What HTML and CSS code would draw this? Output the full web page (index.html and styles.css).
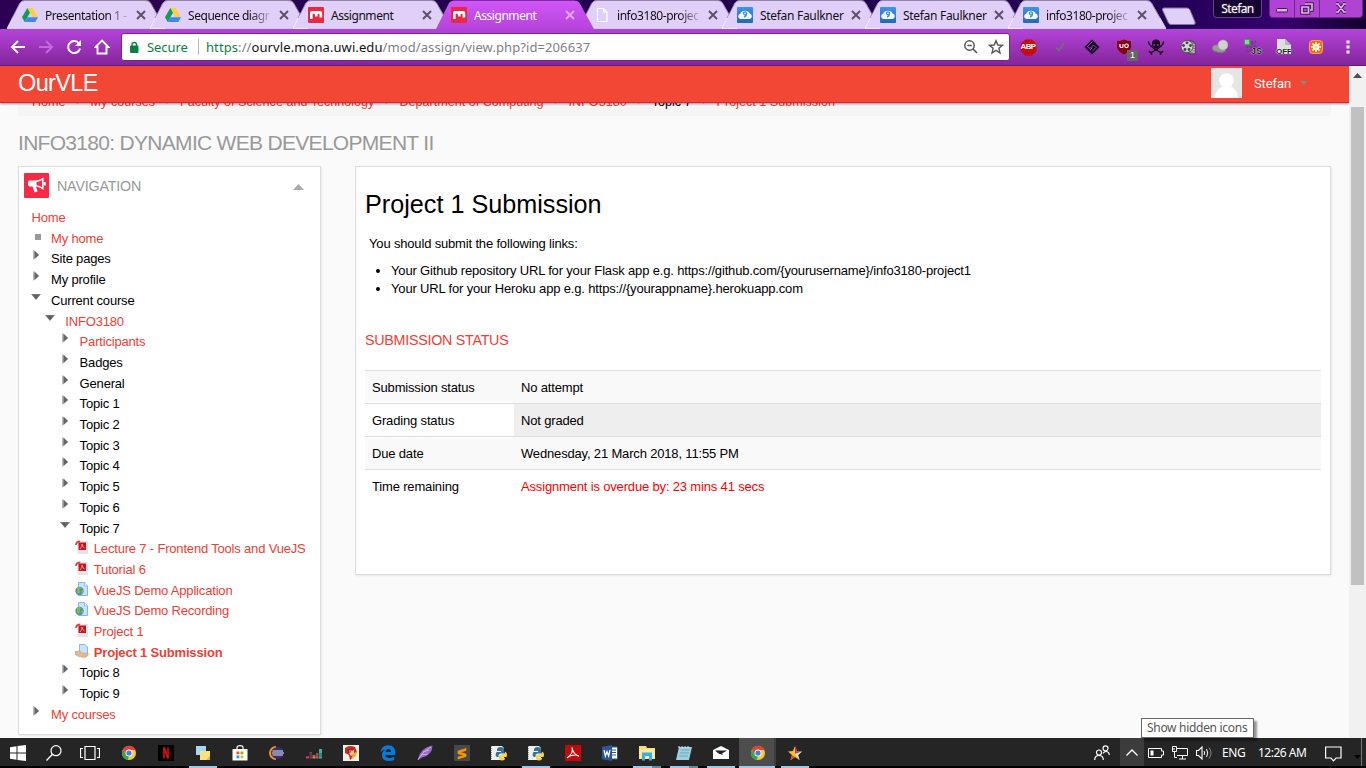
FILE: index.html
```html
<!DOCTYPE html>
<html lang="en">
<head>
<meta charset="utf-8">
<title>Assignment</title>
<link rel="stylesheet" href="styles.css">
</head>
<body>
<svg class="defs" width="0" height="0" aria-hidden="true">
  <defs>
    <linearGradient id="gActive" x1="0" y1="0" x2="0" y2="1"><stop offset="0" stop-color="#d256f8"/><stop offset="1" stop-color="#b544db"/></linearGradient>
    <linearGradient id="gSky" x1="0" y1="0" x2="0" y2="1"><stop offset="0" stop-color="#3d95ea"/><stop offset="1" stop-color="#2468b4"/></linearGradient>
    <symbol id="tab" viewBox="0 0 158 29"><path d="M0 28.500L13 3Q14.500 .5 18 .5H138Q142 .5 143.500 3L158 28.500Z" fill="#e0cff9" stroke="#fff" stroke-opacity=".65"/><path d="M5 18L13 3Q14.500 .5 18 .5H138Q142 .5 143.500 3L152 18" fill="none" stroke="#71608f" stroke-opacity=".65"/></symbol>
    <symbol id="tab-on" viewBox="0 0 158 29"><path d="M0 29L13 3Q14.500 .5 18 .5H138Q142 .5 143.500 3L158 29Z" fill="url(#gActive)"/></symbol>
    <symbol id="drive" viewBox="0 0 16 14"><path d="M5.300 0H10.700L16 9.300H10.600Z" fill="#ffcd40"/><path d="M5.300 0L8 4.700 2.700 14 0 9.300Z" fill="#0f9d58"/><path d="M5.400 9.300H16L13.300 14H2.700Z" fill="#4285f4"/></symbol>
    <symbol id="mendeley" viewBox="0 0 16 16"><rect width="16" height="16" rx="1" fill="#e92842"/><path d="M2 12V6Q2 4 4 4H12Q14.200 4 14.200 6V10.500H11.500V6.800H10.500Q9.500 6.800 9.500 8V9.500H7V8Q7 6.800 6 6.800H4.600V12Z" fill="#fff"/></symbol>
    <symbol id="cloud9" viewBox="0 0 16 16"><rect width="16" height="16" rx="1" fill="url(#gSky)"/><path d="M3.500 12a2.700 2.700 0 0 1-.3-5.300A5 4.500 0 0 1 12.600 6.500a2.800 2.800 0 0 1 0 5.500Z" fill="#f4f9fd"/><circle cx="8" cy="6.300" r="1.500" fill="none" stroke="#3c93cf" stroke-width="1.300"/><path d="M9.500 6.300Q9.500 9.500 7 10" fill="none" stroke="#3c93cf" stroke-width="1.300"/></symbol>
    <symbol id="page" viewBox="0 0 16 16"><path d="M3.500 1.500H9.500L13 5V14.500H3.500ZM9.500 1.500V5H13" fill="none" stroke="#fff" stroke-width="1.200"/></symbol>
    <symbol id="x" viewBox="0 0 10 10"><path d="M1 1L9 9M9 1L1 9" stroke="currentColor" stroke-width="1.900"/></symbol>
    <symbol id="right" viewBox="0 0 6 10"><path d="M0 0L6 5 0 10Z" fill="#bbb"/><path d="M1.500 .5L6 5 1.500 9Z" fill="#666"/></symbol>
    <symbol id="down" viewBox="0 0 10 6"><path d="M0 0H10L5 6Z" fill="#777"/><path d="M2 1H8L5 5Z" fill="#606060"/></symbol>
    <symbol id="pdf" viewBox="0 0 14 14"><path d="M2.500 1H13V14H2.500Z" fill="#e4e5e9"/><rect x="3.500" y="2.500" width="7.500" height="7.500" fill="#c9141d"/><path d="M0 5Q.5 .6 5.500 .6L4.500 2.800Q2.200 2.600 1.600 5Z" fill="#e93b3b"/><path d="M5 9Q7.500 6.500 7 4Q7.300 7 9.700 8" fill="none" stroke="#f3b0b0" stroke-width=".8"/></symbol>
    <symbol id="url" viewBox="0 0 14 14"><path d="M3.500 .5H9.500L12.500 3.500V13.500H3.500Z" fill="#c7e2fa" stroke="#88b6e4"/><path d="M9.500 .5V4H13" fill="#eef7ff" stroke="#88b6e4" stroke-width=".8"/><circle cx="4.500" cy="9" r="4.200" fill="#5489c4"/><path d="M2 6Q5 3.800 6 6.500L4.500 8 5.500 10 3.500 12 2 10.500ZM6.500 8.500L8.500 8 8 11 6.500 11.500Z" fill="#80c13c"/></symbol>
    <symbol id="assign" viewBox="0 0 14 14"><path d="M4.500 .5H10L12.500 3V10.500H4.500Z" fill="#c7e2fa" stroke="#88b6e4"/><path d="M0 7.500L5 7 7 9 13.500 9.500Q13 13 9 13.500L4 12.500 0 10.500Z" fill="#e5b88d" stroke="#c89065" stroke-width=".5"/></symbol>
    <symbol id="chrome" viewBox="0 0 16 16"><circle cx="8" cy="8" r="7" fill="#f9ca31"/><path d="M1.900 4.500A7 7 0 0 1 14.500 5H8L5 9.700Z" fill="#e14434"/><path d="M1.900 4.500L5.300 10 8 11.300 6.700 14.900A7 7 0 0 1 1.900 4.500Z" fill="#36a457"/><circle cx="8" cy="8" r="3.500" fill="#fff"/><circle cx="8" cy="8" r="2.600" fill="#427fe0"/></symbol>
    <symbol id="python" viewBox="0 0 16 16"><path d="M0 1H11L13 3V15H0Z" fill="#f1f1ef"/><path d="M.5 1V15" stroke="#999" stroke-width="1" stroke-dasharray="1 1"/><path d="M9.500 2Q5.500 2 6 6H10V7H5.500Q3.500 11 6 12H7.500Q7 8.500 10 8.500H13V4Q13 2 9.500 2Z" fill="#35739f"/><path d="M14 6.500Q17 8 15.500 12H11V13H14Q14 15.500 11 15.500 8 15.500 8 13V11Q8 9.500 11 9.500 14 9 14 6.500Z" fill="#ffd43d"/></symbol>
  </defs>
</svg>

<header class="browser">
  <div class="tabstrip">
    <div class="tabs">
      <div class="tab"><svg class="shape"><use href="#tab"/></svg><svg class="fav drive"><use href="#drive"/></svg><span class="tab-title">Presentation 1 -</span><svg class="close"><use href="#x"/></svg></div>
      <div class="tab"><svg class="shape"><use href="#tab"/></svg><svg class="fav drive"><use href="#drive"/></svg><span class="tab-title">Sequence diagr</span><svg class="close"><use href="#x"/></svg></div>
      <div class="tab"><svg class="shape"><use href="#tab"/></svg><svg class="fav"><use href="#mendeley"/></svg><span class="tab-title">Assignment</span><svg class="close"><use href="#x"/></svg></div>
      <div class="tab active"><svg class="shape"><use href="#tab-on"/></svg><svg class="fav"><use href="#mendeley"/></svg><span class="tab-title">Assignment</span><svg class="close"><use href="#x"/></svg></div>
      <div class="tab"><svg class="shape"><use href="#tab"/></svg><svg class="fav"><use href="#page"/></svg><span class="tab-title">info3180-projec</span><svg class="close"><use href="#x"/></svg></div>
      <div class="tab"><svg class="shape"><use href="#tab"/></svg><svg class="fav"><use href="#cloud9"/></svg><span class="tab-title full">Stefan Faulkner</span><svg class="close"><use href="#x"/></svg></div>
      <div class="tab"><svg class="shape"><use href="#tab"/></svg><svg class="fav"><use href="#cloud9"/></svg><span class="tab-title full">Stefan Faulkner</span><svg class="close"><use href="#x"/></svg></div>
      <div class="tab"><svg class="shape"><use href="#tab"/></svg><svg class="fav"><use href="#cloud9"/></svg><span class="tab-title">info3180-projec</span><svg class="close"><use href="#x"/></svg></div>
    </div>
    <svg class="newtab" width="36" height="19" viewBox="0 0 36 19"><path d="M3 1H26Q28 1 29 3L34 15Q35 17.500 32 17.500H10Q8 17.500 7 15L1.500 3Q1 1 3 1Z" fill="#e0cff9" stroke="#8575a0"/></svg>
    <div class="window">
      <span class="profile">Stefan</span>
      <div class="controls">
        <span class="ctl"><svg width="12" height="16" viewBox="0 0 12 16"><rect x=".5" y="8.500" width="11" height="3.500" rx="1" fill="#d8b2e6" stroke="#461854"/></svg></span>
        <span class="ctl"><svg width="14" height="16" viewBox="0 0 14 16"><path d="M5 4H12V10H10M2 7H8.500V13H2Z" fill="none" stroke="#461854" stroke-width="3.600"/><path d="M5 4H12V10H10M2 7H8.500V13H2Z" fill="none" stroke="#dfb6eb" stroke-width="1.700"/></svg></span>
        <span class="ctl wide"><svg width="12" height="16" viewBox="0 0 12 16"><path d="M3 4L9 12M9 4L3 12M1 12H4M8 12H11M1 4H4M8 4H11" fill="none" stroke="#461854" stroke-width="3.500"/><path d="M3 4L9 12M9 4L3 12M1 12H4M8 12H11M1 4H4M8 4H11" fill="none" stroke="#dfb6eb" stroke-width="1.500"/></svg></span>
      </div>
    </div>
  </div>

  <div class="toolbar">
    <div class="navbtns">
      <svg width="16" height="16" viewBox="0 0 16 16"><path d="M15 8H2M8 2L2 8 8 14" fill="none" stroke="#fff" stroke-width="2"/></svg>
      <svg width="16" height="16" viewBox="0 0 16 16"><path d="M1 8H14M8 2L14 8 8 14" fill="none" stroke="#c46bdc" stroke-width="2"/></svg>
      <svg width="16" height="16" viewBox="0 0 16 16"><path d="M13 4.500A6 6 0 1 0 14 9.500" fill="none" stroke="#fff" stroke-width="2"/><path d="M15 1V7H9Z" fill="#fff"/></svg>
      <svg width="16" height="16" viewBox="0 0 16 16"><path d="M8 1.500L14.500 8H12.500V14.500H3.500V8H1.500Z" fill="none" stroke="#fff" stroke-width="1.900"/></svg>
    </div>
    <div class="omnibox">
      <svg class="lock" width="10" height="13" viewBox="0 0 10 13"><rect x="1" y="4.500" width="8.500" height="7.500" rx="1" fill="#0b8043"/><path d="M3 5V3.500Q3 1.500 5.200 1.500T7.500 3.500V5" fill="none" stroke="#0b8043" stroke-width="1.400"/></svg>
      <span class="secure">Secure</span><span class="bar"></span>
      <span class="addr"><span class="green">https</span>://<b>ourvle.mona.uwi.edu</b>/mod/assign/view.php?id=206637</span>
      <svg class="mag" width="16" height="16" viewBox="0 0 16 16"><circle cx="6.500" cy="6.500" r="4.700" fill="none" stroke="#555" stroke-width="1.500"/><path d="M4.300 6.500H8.700M10 10L14 14" stroke="#555" stroke-width="1.700"/></svg>
      <svg width="16" height="16" viewBox="0 0 16 16"><path d="M8 1.700L9.800 6 14.500 6.300 10.900 9.300 12 14 8 11.400 4 14 5.100 9.300 1.500 6.300 6.200 6Z" fill="none" stroke="#555" stroke-width="1.400"/></svg>
    </div>
    <div class="exts">
      <span class="ext"><svg width="17" height="17" viewBox="0 0 17 17"><path d="M5 .5H12L16.500 5V12L12 16.500H5L.5 12V5Z" fill="#c70d0d"/></svg><b class="abp">ABP</b></span>
      <span class="ext"><svg width="16" height="16" viewBox="0 0 16 16"><path d="M4 8.500L7 11.500 12 4" fill="none" stroke="#727272" stroke-width="1.700"/></svg></span>
      <span class="ext"><svg width="16" height="16" viewBox="0 0 16 16"><path d="M8 .5L15.500 8 8 15.500 .5 8Z" fill="#16061c"/><path d="M8.500 2.500L3.500 7.500 6 9.500 9.500 6 12 8.500 8 12.500M8.500 8.500L6 11" fill="none" stroke="#aa3acb" stroke-width="1"/></svg></span>
      <span class="ext"><svg width="16" height="16" viewBox="0 0 16 16"><path d="M8 .5Q11 2 15 2V8Q14 13 8 15.500 2 13 1 8V2Q5 2 8 .5Z" fill="#800010"/><path d="M4 5V7.500Q4 8.500 5.500 8.500T7 7.500V5" fill="none" stroke="#fff" stroke-width="1.200"/><circle cx="10.500" cy="6.800" r="1.800" fill="none" stroke="#fff" stroke-width="1.200"/></svg><i class="count">1</i></span>
      <span class="ext"><svg width="16" height="16" viewBox="0 0 16 16"><path d="M0 2Q1 8 14 14M16 2Q15 8 2 14M1 12L4 15.500M15 12L12 15.500" fill="none" stroke="#1a061f" stroke-width="1.500"/><path d="M4 4Q4 .5 8 .5T12 4V7L10 9V11H6V9L4 7Z" fill="#1a061f"/><path d="M5.500 5.500H7V6.500H5.500ZM9 5.500H10.500V6.500H9ZM7 9.500H9" fill="#a63ac6" stroke="#a63ac6" stroke-width=".4"/></svg></span>
      <span class="ext"><svg width="16" height="16" viewBox="0 0 16 16"><path d="M10 1L15 4V15H9Z" fill="#888" stroke="#333" stroke-width=".7"/><path d="M12 4V14M14 5V14" stroke="#eee" stroke-dasharray="1.5 1"/><circle cx="7" cy="7.500" r="6" fill="#d5d5d5" stroke="#555"/><g fill="#444"><circle cx="7" cy="3.800" r="1.400"/><circle cx="3.500" cy="6.500" r="1.400"/><circle cx="10.500" cy="6.500" r="1.400"/><circle cx="5" cy="10.500" r="1.400"/><circle cx="9" cy="10.500" r="1.400"/></g></svg></span>
      <span class="ext"><svg width="16" height="16" viewBox="0 0 16 16"><path d="M0 9Q1 5 6 6L10 8 14 12Q10 15 5 13 0 12 0 9Z" fill="#999" stroke="#777"/><circle cx="11" cy="6" r="5" fill="#d1d1d1" stroke="#aaa" stroke-width=".6"/></svg></span>
      <span class="ext"><svg width="17" height="17" viewBox="0 0 17 17"><path d="M8 2V6M8 5L12 2M5 8H12M2 8H4M7 7V13M3 11L6 13M10 6L13 8" stroke="#704080" stroke-width="2" stroke-dasharray="2.500 .7"/><rect x=".5" y=".5" width="5" height="5" fill="#80df8b" stroke="#3ba84e"/></svg><b class="js">JS</b></span>
      <span class="ext"><svg width="16" height="16" viewBox="0 0 16 16"><path d="M1 0H9L15 6V15H1Z" fill="#dedede"/><path d="M9 0V6H15Z" fill="#b8b8b8"/></svg><b class="off">OFF</b></span>
      <span class="ext"><svg width="16" height="16" viewBox="0 0 16 16"><rect x="1.500" y="1.500" width="13" height="13" rx="3" fill="#f46b1b" stroke="#fba45c"/><circle cx="8" cy="8" r="3.300" fill="#fffbe0"/><path d="M8 3V13M3 8H13M4.500 4.500L11.500 11.500M11.500 4.500L4.500 11.500" stroke="#fffbe0" stroke-width="1.700"/><circle cx="8" cy="8" r="1.500" fill="#ffda73"/></svg></span>
      <span class="ext"><svg width="4" height="14" viewBox="0 0 4 14"><path d="M.5 .5H3.500V3.500H.5ZM.5 5.500H3.500V8.500H.5ZM.5 10.500H3.500V13.500H.5Z" fill="#fff"/></svg></span>
    </div>
  </div>
</header>

<div class="viewport">
  <div class="site">
    <div class="topbar">
      <span class="brand">OurVLE</span>
      <div class="user">
        <svg class="avatar" width="31" height="30" viewBox="0 0 31 30"><rect width="31" height="30" fill="#e5e5e5"/><circle cx="15.500" cy="12.500" r="7.300" fill="#fff"/><path d="M4 30Q5 20 12 18.500H19Q26 20 27 30Z" fill="#fff"/></svg>
        <span class="username">Stefan</span><svg class="caret" width="7" height="4" viewBox="0 0 7 4"><path d="M0 0H7L3.500 4Z" fill="#8b8b7d"/></svg>
      </div>
    </div>
    <nav class="crumbs">
      <a>Home</a><i>/</i><a>My courses</a><i>/</i><a>Faculty of Science and Technology</a><i>/</i><a>Department of Computing</a><i>/</i><a>INFO3180</a><i>/</i><span>Topic 7</span><i>/</i><a>Project 1 Submission</a>
    </nav>
    <h1 class="course">INFO3180: DYNAMIC WEB DEVELOPMENT II</h1>
    <div class="columns">
      <aside class="block">
        <div class="block-head">
          <svg class="horn" width="25" height="25" viewBox="0 0 25 25"><rect width="25" height="25" rx="1" fill="#f62a46"/><path d="M5 7.500H11Q15 7.500 19.500 4.500V17Q15 13.500 12 13.500L13.500 18.500 10.500 19.500 8.500 13.500H6Q4 13.500 4 10.500T5 7.500Z" fill="#fff"/><path d="M12.500 9Q15.500 8.500 18 7.200V14.300Q15.500 12.700 12.500 12Z" fill="#f62a46"/><rect x="19.500" y="9" width="2.200" height="3.500" fill="#fff"/></svg>
          <h2>NAVIGATION</h2>
          <svg width="11" height="6" viewBox="0 0 11 6"><path d="M0 6L5.500 0 11 6Z" fill="#aaa"/></svg>
        </div>
        <ul class="tree">
          <li class="l0 link">Home</li>
          <li class="l1 link"><span class="tw"><i class="sq"></i></span>My home</li>
          <li class="l1"><span class="tw"><svg class="r"><use href="#right"/></svg></span>Site pages</li>
          <li class="l1"><span class="tw"><svg class="r"><use href="#right"/></svg></span>My profile</li>
          <li class="l1"><span class="tw"><svg class="d"><use href="#down"/></svg></span>Current course</li>
          <li class="l2 link"><span class="tw"><svg class="d"><use href="#down"/></svg></span>INFO3180</li>
          <li class="l3 link"><span class="tw"><svg class="r"><use href="#right"/></svg></span>Participants</li>
          <li class="l3"><span class="tw"><svg class="r"><use href="#right"/></svg></span>Badges</li>
          <li class="l3"><span class="tw"><svg class="r"><use href="#right"/></svg></span>General</li>
          <li class="l3"><span class="tw"><svg class="r"><use href="#right"/></svg></span>Topic 1</li>
          <li class="l3"><span class="tw"><svg class="r"><use href="#right"/></svg></span>Topic 2</li>
          <li class="l3"><span class="tw"><svg class="r"><use href="#right"/></svg></span>Topic 3</li>
          <li class="l3"><span class="tw"><svg class="r"><use href="#right"/></svg></span>Topic 4</li>
          <li class="l3"><span class="tw"><svg class="r"><use href="#right"/></svg></span>Topic 5</li>
          <li class="l3"><span class="tw"><svg class="r"><use href="#right"/></svg></span>Topic 6</li>
          <li class="l3"><span class="tw"><svg class="d"><use href="#down"/></svg></span>Topic 7</li>
          <li class="l4 link"><span class="tw"><svg class="f"><use href="#pdf"/></svg></span>Lecture 7 - Frontend Tools and VueJS</li>
          <li class="l4 link"><span class="tw"><svg class="f"><use href="#pdf"/></svg></span>Tutorial 6</li>
          <li class="l4 link"><span class="tw"><svg class="f"><use href="#url"/></svg></span>VueJS Demo Application</li>
          <li class="l4 link"><span class="tw"><svg class="f"><use href="#url"/></svg></span>VueJS Demo Recording</li>
          <li class="l4 link"><span class="tw"><svg class="f"><use href="#pdf"/></svg></span>Project 1</li>
          <li class="l4 link current"><span class="tw"><svg class="f"><use href="#assign"/></svg></span>Project 1 Submission</li>
          <li class="l3"><span class="tw"><svg class="r"><use href="#right"/></svg></span>Topic 8</li>
          <li class="l3"><span class="tw"><svg class="r"><use href="#right"/></svg></span>Topic 9</li>
          <li class="l1 link"><span class="tw"><svg class="r"><use href="#right"/></svg></span>My courses</li>
        </ul>
      </aside>
      <main class="content">
        <h2 class="title">Project 1 Submission</h2>
        <p class="intro">You should submit the following links:</p>
        <ul class="links">
          <li>Your Github repository URL for your Flask app e.g. https://github.com/{yourusername}/info3180-project1</li>
          <li>Your URL for your Heroku app e.g. https://{yourappname}.herokuapp.com</li>
        </ul>
        <h3 class="status">SUBMISSION STATUS</h3>
        <table class="grid">
          <tr><td>Submission status</td><td>No attempt</td></tr>
          <tr><td>Grading status</td><td>Not graded</td></tr>
          <tr><td>Due date</td><td>Wednesday, 21 March 2018, 11:55 PM</td></tr>
          <tr><td>Time remaining</td><td class="overdue">Assignment is overdue by: 23 mins 41 secs</td></tr>
        </table>
      </main>
    </div>
  </div>
  <div class="scrollbar"><svg width="9" height="5" viewBox="0 0 9 5"><path d="M4.500 0L9 5H0Z" fill="#505050"/></svg><div class="thumb"></div></div>
</div>

<div class="tooltip">Show hidden icons</div>

<footer class="taskbar">
  <div class="sys">
    <span><svg width="16" height="16" viewBox="0 0 16 16"><path d="M0 2.300L6.500 1.300V7.500H0ZM7.500 1.100L16 0V7.500H7.500ZM0 8.500H6.500V14.700L0 13.700ZM7.500 8.500H16V16L7.500 14.900Z" fill="#fff"/></svg></span>
    <span><svg width="16" height="16" viewBox="0 0 16 16"><circle cx="10" cy="5.700" r="5" fill="none" stroke="#fff" stroke-width="1.200"/><path d="M6.500 9.300L.5 15.500" stroke="#fff" stroke-width="1.400"/></svg></span>
    <span><svg width="20" height="16" viewBox="0 0 20 16"><path d="M5 1.500H15V14.500H5ZM3 3.500H.5V12.500H3M17 3.500H19.500V12.500H17" fill="none" stroke="#fff" stroke-width="1.200"/></svg></span>
  </div>
  <div class="apps">
    <span><svg><use href="#chrome"/></svg></span>
    <span><svg viewBox="0 0 16 16"><rect width="16" height="16" fill="#000"/><path d="M5 2.500H7V13.500H5ZM9 2.500H11V13.500H9Z" fill="#b00710"/><path d="M5 2.500H7L11 13.500H9Z" fill="#e50914"/></svg></span>
    <span class="run"><svg viewBox="0 0 16 16"><path d="M1 1H11V10H1Z" fill="#a5d8f3"/><path d="M5 6H15V15H5Z" fill="#f9e27d"/><path d="M11 15L15 11V15Z" fill="#d7b94c"/></svg></span>
    <span><svg viewBox="0 0 16 16"><path d="M.5 4H15.500V15.500H.5Z" fill="#fff"/><path d="M5 4V2.500Q5 .7 8 .7T11 2.500V4" fill="none" stroke="#fff" stroke-width="1.200"/><path d="M4.500 6.500H7.300V9.300H4.500Z" fill="#ef5225"/><path d="M8.500 6.500H11.300V9.300H8.500Z" fill="#80b51c"/><path d="M4.500 10.500H7.300V13.300H4.500Z" fill="#05a7e8"/><path d="M8.500 10.500H11.300V13.300H8.500Z" fill="#f8b514"/></svg></span>
    <span><svg viewBox="0 0 16 16"><path d="M7 2A6 6 0 0 0 7 14" fill="none" stroke="#f4941d" stroke-width="2"/><circle cx="8.700" cy="8" r="6" fill="#34306f"/><path d="M3.500 6H14M2.700 8H15M3.500 10H14" stroke="#e5dff0" stroke-width="1.100"/></svg></span>
    <span><svg viewBox="0 0 16 16"><path d="M0 11H3V13.500H0Z" fill="#d23a50"/><path d="M3.500 7H6V13.500H3.500Z" fill="#873b65"/><path d="M6.500 10H9.500V13.500H6.500Z" fill="#df9644"/><path d="M10 8H12.500V13.500H10Z" fill="#ac6a72"/><path d="M13 4H16V13.500H13Z" fill="#4ba8a5"/><path d="M0 9H16M0 11H16" stroke="#252525" stroke-width=".6"/></svg></span>
    <span><svg viewBox="0 0 16 16"><rect width="16" height="16" fill="#f5eee2"/><path d="M2 3Q6-.5 12 2L14 7 11 12 7 15 6 10 2 8Z" fill="#c82c24"/><path d="M6 5H11V9L8 11 6 8Z" fill="#f1c49a"/><path d="M10 9L14 6 13 11 8 14Z" fill="#e8b42b"/><path d="M4 5H10M5 7H8" stroke="#751c1c"/></svg></span>
    <span><svg viewBox="0 0 16 16"><path d="M.5 7Q1.500 .2 8.300 .2 15.300 .2 15.300 8V10H5.200Q5.500 13 9.500 13 12 13 14.200 11.700V15Q12 16 9 16 2 16 2 10 2 6.500 5.500 4.500 2.500 4.500 .5 7ZM5.500 7H11Q11 4 8.300 4 6 4 5.500 7Z" fill="#087bd9" fill-rule="evenodd"/></svg></span>
    <span><svg viewBox="0 0 16 16"><path d="M1 14Q3 3 15.500 .5 15.500 10 5 12.500L1 15Z" fill="#9869c8"/><path d="M1 15Q6 6 14 2M4 10L11 9M6 7L12 5" fill="none" stroke="#d9b4eb" stroke-width=".8"/></svg></span>
    <span><svg viewBox="0 0 16 16"><rect width="16" height="16" rx="1" fill="#484848"/><path d="M12 3.500L4 6V8.700L10 10.300 4 12V14L12 11.500V9L6 7.300 12 5.500Z" fill="#ff9800" stroke="#ff9800" stroke-width=".6"/></svg></span>
    <span><svg><use href="#python"/></svg></span>
    <span class="run"><svg><use href="#python"/></svg></span>
    <span><svg viewBox="0 0 16 16"><rect width="16" height="16" fill="#c80808"/><path d="M2 13Q9 8 7 2.500Q8 9 14 11.500M3 12Q8 9 14 10.500" fill="none" stroke="#fff" stroke-width="1.200"/></svg></span>
    <span><svg viewBox="0 0 16 16"><path d="M9 2H15.500V14H9Z" fill="#fff" stroke="#2b579a"/><path d="M10 5H14M10 7.500H14M10 10H14" stroke="#2b579a"/><path d="M0 1.800L10 0V16L0 14.200Z" fill="#2b579a"/><path d="M2 5L3.400 11 5 6.500 6.600 11 8 5" fill="none" stroke="#fff" stroke-width="1.200"/></svg></span>
    <span class="run multi"><svg viewBox="0 0 16 16"><path d="M0 1H7L8 3H16V14H0Z" fill="#fcda78"/><path d="M0 4H16V14H0Z" fill="#ffe79c"/><path d="M3 7.500H13V15.500H10V11H6V15.500H3Z" fill="#36afe8"/></svg></span>
    <span class="run multi"><svg viewBox="0 0 16 16"><path d="M3 2H16L13 15H0Z" fill="#9ad0df"/><path d="M5 5H14M4 8H13M3 11H12" stroke="#6b9eab" stroke-width=".8"/><path d="M3 1V3M6 1V3M9 1V3M12 1V3" stroke="#eee"/></svg></span>
    <span class="run"><svg viewBox="0 0 16 16"><path d="M0 5L8 1 16 5V14H0Z" fill="#fff"/><path d="M2 5.500H14L9 8.500 10 10 5.500 8.500Z" fill="#222"/></svg></span>
    <span class="run on"><svg><use href="#chrome"/></svg></span>
    <span class="run"><svg viewBox="0 0 16 16"><path d="M8 1L10 6 15 6.500 11 10 12.500 15 8 12 3.500 15 5 10 1 6.500 6 6Z" fill="#f6c32a"/><path d="M8 1L10 6 8 9Z" fill="#d62c30"/><path d="M10 6L15 6.500 8 9Z" fill="#7550a8"/><path d="M15 6.500L11 10 12.500 15 8 9Z" fill="#ddd"/><path d="M5 10L3.500 15 8 12Z" fill="#e84c35"/></svg></span>
  </div>
  <div class="tray">
    <span class="people"><svg width="16" height="16" viewBox="0 0 16 16"><circle cx="5" cy="7.500" r="2.500" fill="none" stroke="#fff" stroke-width="1.200"/><path d="M.7 15Q.7 10.500 5 10.500T9.300 15M9 8.500Q10 6.500 12 6.500 15 6.500 15.300 10" fill="none" stroke="#fff" stroke-width="1.200"/><circle cx="11.500" cy="3.300" r="2.500" fill="none" stroke="#fff" stroke-width="1.200"/></svg></span>
    <span class="hidden-icons"><svg width="12" height="7" viewBox="0 0 12 7"><path d="M.5 6.500L6 1 11.500 6.500" fill="none" stroke="#fff" stroke-width="1.300"/></svg></span>
    <span class="tr"><svg width="16" height="10" viewBox="0 0 16 10"><path d="M.5 .5H13.500V3H15.500V7H13.500V9.500H.5Z" fill="none" stroke="#fff"/><path d="M2.500 2.500H5.500V7.500H2.500Z" fill="#fff"/></svg></span>
    <span class="tr"><svg width="17" height="14" viewBox="0 0 17 14"><path d="M5 2.500H15.500V9.500H5M10.500 9.500V13M7 13H14M.5 .5H4.500V5.500H.5ZM2.500 5.500V11.500H5M2 2V4" fill="none" stroke="#fff"/></svg></span>
    <span class="tr"><svg width="17" height="14" viewBox="0 0 17 14"><path d="M.5 4.500H2.500L6 1V13L2.500 9.500H.5Z" fill="none" stroke="#fff" stroke-width="1.100"/><path d="M8 5Q9.500 7 8 9M10.500 3Q13 7 10.500 11" fill="none" stroke="#fff"/><path d="M13 1.500Q17 7 13 12.500" fill="none" stroke="#888"/></svg></span>
    <span class="lang">ENG</span><span class="clock">12:26 AM</span>
    <svg class="note" width="17" height="16" viewBox="0 0 17 16"><path d="M.6 1H16V12H11L8.500 14.800 6 12H.6Z" fill="none" stroke="#fff" stroke-width="1.200"/></svg>
    <svg class="tail" width="7" height="4" viewBox="0 0 7 4"><path d="M0 0H7L3.500 4Z" fill="#050505"/></svg>
  </div>
</footer>
</body>
</html>
```
FILE: styles.css
```css
* { box-sizing: border-box; }
body { margin: 0; width: 1366px; height: 768px; overflow: hidden; position: relative; display: flex; flex-direction: column; font-family: "Liberation Sans", Arial, sans-serif; background: #fafafa; }
svg { display: block; flex: none; }
.defs { position: absolute; }
h1, h2, h3, p, ul { margin: 0; padding: 0; font-weight: normal; list-style: none; }

.browser { flex: none; height: 66px; font-family: "Noto Sans", "Open Sans", sans-serif; }
.tabstrip { height: 29px; display: flex; background: linear-gradient(90deg, #2c0052, #21004c 50%, #220056 85%, #35006d 94%, #12002e); }
.tabs { display: flex; padding-left: 7px; }
.tab { position: relative; width: 143px; height: 29px; display: flex; align-items: center; padding: 1px 0 0 15px; color: #111; }
.shape { position: absolute; left: 0; top: 0; width: 158px; height: 29px; }
.tab.active { z-index: 2; color: #fff; }
.fav { position: relative; width: 16px; height: 16px; }
.fav.drive { height: 14px; }
.tab-title { position: relative; width: 86px; margin-left: 7px; font-size: 12px; letter-spacing: -.45px; white-space: nowrap; -webkit-mask-image: linear-gradient(90deg, #000 62px, transparent 86px); }
.tab-title.full { -webkit-mask-image: none; letter-spacing: -.3px; }
.active .tab-title, .tab:nth-child(3) .tab-title { -webkit-mask-image: none; }
.close { position: relative; width: 10px; height: 10px; margin-left: 5px; color: #5a5165; }
.active .close { color: #e5a6f5; }
.newtab { margin: 7px 0 0 10px; }
.window { margin-left: auto; display: flex; align-items: flex-start; padding-right: 3px; }
.profile { width: 49px; height: 18px; border: 1px solid #5e4688; border-top: 0; border-radius: 0 0 4px 4px; background: #170033; color: #fff; font-size: 12px; line-height: 17px; text-align: center; letter-spacing: -.6px; text-shadow: 0 0 2px #fff6; }
.controls { display: flex; margin-left: 7px; height: 18px; border: 1px solid #74248e; border-top: 0; border-radius: 0 0 4px 4px; background: #b143d4; }
.ctl { width: 25px; display: flex; justify-content: center; border-right: 1px solid #74248e; }
.ctl.wide { width: 42px; border: 0; }

.toolbar { height: 37px; display: flex; align-items: center; background: linear-gradient(#b444da, #84259a); border-bottom: 1px solid #651b79; }
.navbtns { display: flex; gap: 12px; padding-left: 10px; width: 121px; }
.omnibox { width: 889px; height: 28px; display: flex; align-items: center; background: #fff; border: 1px solid #7b2491; border-radius: 3px; padding: 0 5px 0 7px; font-size: 13px; }
.secure { margin-left: 8px; color: #0b8043; width: 42px; letter-spacing: -.05px; }
.bar { width: 1px; height: 16px; background: #b8b8b8; margin: 0 7px 0 9px; }
.addr { color: #808080; white-space: nowrap; letter-spacing: .09px; }
.addr b { font-weight: normal; color: #111; }
.green { color: #0b8043; }
.mag { margin-left: auto; margin-right: 9px; }
.exts { display: flex; padding-left: 2px; }
.ext { position: relative; width: 32px; height: 20px; display: flex; align-items: center; justify-content: center; }
.abp, .js, .off, .count { position: absolute; font-family: "Liberation Sans", Arial, sans-serif; line-height: 1; }
.abp { color: #fff; font-size: 8px; letter-spacing: -.6px; left: 8.500px; top: 6px; }
.js { color: #111; font-size: 9px; left: 15px; top: 10px; text-shadow: 0 0 1px #fff, 0 0 1px #fff; }
.off { color: #222; font-size: 8px; left: 8px; top: 11px; text-shadow: 0 0 1px #fff, 0 0 1px #fff; }
.count { left: 19px; top: 13px; width: 11px; height: 11px; background: #666; color: #fff; font-size: 9px; line-height: 11px; font-style: normal; text-align: center; }

.viewport { flex: none; height: 672px; display: flex; }
.site { width: 1349px; background: #fafafa; overflow: hidden; }
.topbar { position: relative; z-index: 1; height: 37px; display: flex; justify-content: space-between; background: #f24735; border-bottom: 1px solid #f0183a; box-shadow: 0 1px 2px #0006; padding: 0 41px 0 18px; }
.brand { color: #fff; font-size: 23.500px; line-height: 35px; letter-spacing: -.65px; }
.user { display: flex; align-items: center; color: #fff; padding-bottom: 2px; }
.username { font-size: 13px; letter-spacing: -.1px; margin: 0 9px 0 12px; font-family: Roboto, sans-serif; }
.caret { margin-right: 1px; }
.crumbs { height: 31px; margin: -18px 18px 0; padding: 6.500px 0 0 14px; background: #f5f5f5; display: flex; font-size: 12.600px; line-height: 20px; white-space: nowrap; }
.crumbs a, .link { color: #ee4034; }
.crumbs i { font-style: normal; font-size: 8px; color: #aaa; width: 25px; text-align: center; }
.course { margin: 12px 0 0 18px; font-size: 21px; letter-spacing: -.7px; line-height: 30px; color: #999; white-space: nowrap; }
.columns { display: flex; align-items: flex-start; gap: 34px; padding: 8px 0 0 18px; }
.block, .content { background: #fff; border: 1px solid #ddd; box-shadow: 1px 1px 2px #0001; }
.block { width: 303px; height: 569px; }
.block-head { display: flex; align-items: center; height: 40px; padding: 0 16px 4px 5px; }
.block-head h2 { flex: 1; margin-left: 8px; font-size: 14.300px; letter-spacing: -.2px; color: #999; padding-top: 2px; }
.block-head svg:last-child { margin-top: 3px; }
.tree { padding-top: 1px; font-size: 13px; line-height: 20.710px; letter-spacing: -.18px; }
.tree li { display: flex; height: 20.710px; white-space: nowrap; }
.l0 { padding-left: 12.500px; }
.l1 { padding-left: 12px; }
.l2 { padding-left: 26.300px; }
.l3 { padding-left: 40.600px; }
.l4 { padding-left: 54.800px; }
.tw { width: 20px; flex: none; }
.tw .r { width: 6px; height: 10px; margin: 1px 0 0 2px; }
.tw .d { width: 10px; height: 6px; margin-top: 3px; }
.tw .f { width: 14px; height: 14px; margin: 1px 0 0 1px; }
.sq { display: block; width: 6px; height: 6px; background: #999; margin: 5px 0 0 4px; }
.current { font-weight: bold; }
.content { width: 976px; height: 409px; padding: 20px 9px 0; font-size: 13px; letter-spacing: -.165px; }
.title { font-size: 25.200px; line-height: 35px; letter-spacing: 0; }
.intro { margin: 13px 0 9px 4px; line-height: 18px; }
.links { line-height: 18px; padding-left: 26px; }
.links li { list-style: disc; }
.status { margin: 32px 0 20px; font-size: 14.300px; letter-spacing: -.27px; line-height: 20px; color: #ee4034; }
.grid { width: 956px; border-collapse: collapse; }
.grid td { height: 33px; padding: 0 7px; border-top: 1px solid #ddd; }
.grid td:first-child { width: 149px; }
.grid tr:nth-child(odd) td { background: #f9f9f9; }
.grid tr:nth-child(2) td:last-child { background: #eee; }
.grid tr:last-child td { background: #fff; }
.grid .overdue { color: #f00; }
.scrollbar { width: 17px; background: #f1f1f1; display: flex; flex-direction: column; align-items: center; padding-top: 7px; }
.thumb { width: 13px; height: 478px; margin-top: 29px; background: #c1c1c1; }

.tooltip { position: absolute; z-index: 3; left: 1141px; top: 718px; width: 113px; height: 20px; background: #fff; border: 1px solid #666; box-shadow: 3px 3px 2px #0006; color: #555; font: 12px/18px "Noto Sans", sans-serif; letter-spacing: -.3px; padding-left: 5px; white-space: nowrap; }

.taskbar { flex: none; height: 30px; display: flex; background: #252525; border-bottom: 2px solid #000; color: #fff; }
.sys { display: flex; width: 110px; }
.sys span { width: 36px; display: flex; align-items: center; justify-content: center; padding-top: 1px; }
.apps { display: flex; }
.apps span { position: relative; width: 37px; height: 28px; display: flex; align-items: center; justify-content: center; padding-top: 2px; }
.apps svg { width: 16px; height: 16px; }
.run::after { content: ""; position: absolute; bottom: -2px; left: 5px; width: 28px; height: 2px; background: #9cc9ec; }
.multi::after { background: linear-gradient(90deg, #9cc9ec 19px, #6588a1 19px); }
.apps .on { background: #4d4d4d; border-right: 2px solid #3d3d3d; padding-left: 2px; }
.on::after { left: 0; width: 36px; }
.tray { margin-left: auto; display: flex; align-items: center; height: 30px; font: 12px/30px "Noto Sans", sans-serif; }
.people { width: 26px; }
.hidden-icons { width: 24px; height: 28px; margin-bottom: 2px; background: #3c3c3c; display: flex; align-items: center; justify-content: center; padding-top: 1px; }
.tr { width: 24px; display: flex; justify-content: center; }
.lang { width: 36px; padding-left: 6px; letter-spacing: -.4px; white-space: nowrap; }
.clock { width: 73px; padding-left: 6px; letter-spacing: -.5px; white-space: nowrap; }
.note { margin: 1px 12px 0 0; }
.tail { margin: 8px 0 0 0; padding: 0; }
.tray::after { content: ""; width: 1px; height: 28px; background: #777; margin: 0 4px 2px 0; }
```
